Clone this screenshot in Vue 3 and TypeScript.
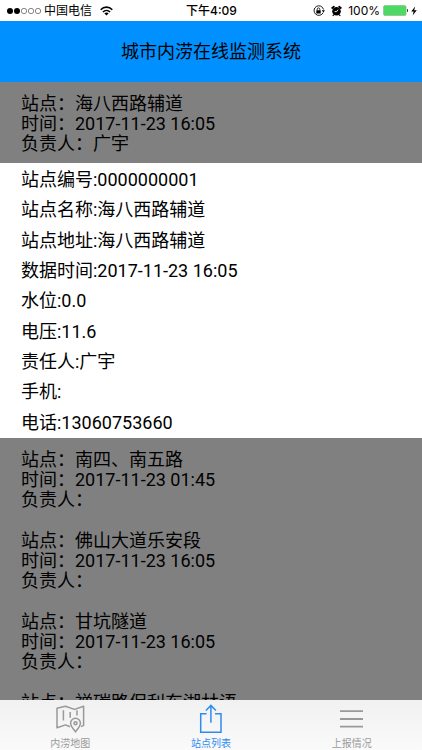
<script setup lang="ts">
import { ref } from 'vue'

interface Station {
  name: string
  time: string
  owner: string
}

interface Field {
  label: string
  value: string
}

type TabId = 'map' | 'list' | 'report'

const stations: Station[] = [
  { name: '海八西路辅道', time: '2017-11-23 16:05', owner: '广宇' },
  { name: '南四、南五路', time: '2017-11-23 01:45', owner: '' },
  { name: '佛山大道乐安段', time: '2017-11-23 16:05', owner: '' },
  { name: '甘坑隧道', time: '2017-11-23 16:05', owner: '' },
  { name: '禅碳路保利东湖林语', time: '2017-11-23 16:05', owner: '' },
]

const details: Field[] = [
  { label: '站点编号', value: '0000000001' },
  { label: '站点名称', value: '海八西路辅道' },
  { label: '站点地址', value: '海八西路辅道' },
  { label: '数据时间', value: '2017-11-23 16:05' },
  { label: '水位', value: '0.0' },
  { label: '电压', value: '11.6' },
  { label: '责任人', value: '广宇' },
  { label: '手机', value: '' },
  { label: '电话', value: '13060753660' },
]

const tabs: { id: TabId; label: string }[] = [
  { id: 'map', label: '内涝地图' },
  { id: 'list', label: '站点列表' },
  { id: 'report', label: '上报情况' },
]

const expanded = ref(0)
const activeTab = ref<TabId>('list')
</script>

<template>
  <div class="app">
    <div class="status">
      <div class="status-side">
        <svg class="signal" width="36" height="8" viewBox="0 0 36 8">
          <circle cx="4" cy="4" r="3" fill="#000" />
          <circle cx="11" cy="4" r="3" fill="#000" />
          <g fill="none" stroke="#555" stroke-width="0.7">
            <circle cx="18" cy="4" r="2.7" />
            <circle cx="25" cy="4" r="2.7" />
            <circle cx="32" cy="4" r="2.7" />
          </g>
        </svg>
        <span>中国电信</span>
        <svg class="wifi" width="13" height="10" viewBox="0 0 13 10">
          <g fill="none" stroke="#000" stroke-width="1.6">
            <path d="M0.7 3.7C4 0.3 9 0.3 12.3 3.7" />
            <path d="M2.9 6C5 3.9 8 3.9 10.1 6" />
          </g>
          <path d="M4.4 7.4C5.6 6.3 7.4 6.3 8.6 7.4L6.5 9.6Z" fill="#000" />
        </svg>
      </div>
      <span class="clock">下午4:09</span>
      <div class="status-side end">
        <svg width="12" height="12" viewBox="0 0 12 12">
          <path d="M10.2 7.6A4.8 4.8 0 1 1 10.5 4.4" fill="none" stroke="#000" stroke-width="0.9" />
          <path d="M8.8 5.2h3.2L10.4 7.4Z" fill="#000" />
          <rect x="3.3" y="5.2" width="4.4" height="3.4" rx="0.4" fill="#000" />
          <path d="M4.2 5.4V4.2a1.3 1.3 0 0 1 2.6 0V5.4" fill="none" stroke="#000" stroke-width="0.8" />
        </svg>
        <svg width="11" height="12" viewBox="0 0 11 12">
          <circle cx="5.5" cy="6.3" r="4.3" fill="#000" />
          <path d="M1.2 3L2.8 1.6M9.8 3L8.2 1.6" stroke="#000" stroke-width="1.8" stroke-linecap="round" />
          <path d="M2.8 9.6L1.8 11M8.2 9.6L9.2 11" stroke="#000" stroke-width="1.2" />
          <path d="M3.6 6.6H5.7L7 4.6" fill="none" stroke="#fff" stroke-width="0.9" />
        </svg>
        <span>100%</span>
        <svg class="battery" width="26" height="11" viewBox="0 0 26 11">
          <rect x="0.5" y="0.5" width="22.6" height="10" rx="1.5" fill="#4cd964" stroke="#8bb392" stroke-width="0.6" />
          <path d="M24 3.8C25.5 4.2 25.5 6.8 24 7.2Z" fill="#333" />
        </svg>
        <svg class="bolt" width="6" height="10" viewBox="0 0 6 10">
          <path d="M4.2 0.5L0.2 5.4H2.7L1.6 9.5L5.8 4.2H3.2Z" fill="#000" />
        </svg>
      </div>
    </div>

    <header class="header">
      <h1>城市内涝在线监测系统</h1>
    </header>

    <main class="content">
      <template v-for="(station, i) in stations" :key="i">
        <section class="station" @click="expanded = i">
          <p>站点：{{ station.name }}</p>
          <p>时间：{{ station.time }}</p>
          <p>负责人：{{ station.owner }}</p>
        </section>
        <section v-if="i === expanded" class="details">
          <p v-for="field in details" :key="field.label">{{ field.label }}:{{ field.value }}</p>
        </section>
      </template>
    </main>

    <nav class="tabs">
      <a
        v-for="tab in tabs"
        :key="tab.id"
        :href="'#' + tab.id"
        class="tab"
        :class="{ active: tab.id === activeTab }"
        @click.prevent="activeTab = tab.id"
      >
        <svg v-if="tab.id === 'map'" width="30" height="30" viewBox="0 0 30 30" fill="none" stroke="currentColor" stroke-width="1.5">
          <path d="M15 22.8L10.5 20.9L2 23.7V4.2L10.5 2.2L19.5 5.4L28.6 2.2V21.4L26 22.6" stroke-linejoin="round" />
          <path d="M8.4 6.3V16.5M15.2 8V13.8M22 6.3V11.5" />
          <path d="M20.5 27.8C17.7 24.3 15.6 22 15.6 19.2A4.9 4.9 0 0 1 25.4 19.2C25.4 22 23.3 24.3 20.5 27.8Z" />
          <circle cx="20.5" cy="19.3" r="1.5" />
        </svg>
        <svg v-else-if="tab.id === 'list'" width="30" height="30" viewBox="0 0 30 30" fill="none" stroke="currentColor" stroke-width="1.5">
          <path d="M10.6 9.8H4.7V28.2H25V9.8H19" />
          <path d="M14.9 18.8V2M9.9 6.5L14.9 1.4L19.9 6.5" />
        </svg>
        <svg v-else width="30" height="30" viewBox="0 0 30 30" fill="none" stroke="currentColor" stroke-width="1.8">
          <path d="M3 7.2H26M3 15H26M3 22.6H26" />
        </svg>
        <span>{{ tab.label }}</span>
      </a>
    </nav>
  </div>
</template>

<style>
body {
  margin: 0;
}
</style>

<style scoped>
.app {
  display: flex;
  flex-direction: column;
  height: 100vh;
  overflow: hidden;
  background: #808080;
  color: #000;
  font-family: Roboto, "Noto Sans CJK SC", sans-serif;
}

.status {
  display: flex;
  align-items: center;
  flex: none;
  height: 21px;
  padding: 0 5px 0 6px;
  background: #fff;
  font-family: Inter, "Noto Sans CJK SC", sans-serif;
  font-size: 12px;
  line-height: 20px;
}

.status-side {
  display: flex;
  flex: 1;
  align-items: center;
  gap: 2px;
}

.end {
  justify-content: flex-end;
  gap: 6px;
}

.wifi {
  margin-left: 6px;
}

.battery {
  margin-left: -3px;
}

.bolt {
  margin-left: -4px;
}

.clock {
  font-weight: 500;
}

.header {
  display: flex;
  align-items: center;
  justify-content: center;
  flex: none;
  height: 61px;
  background: #0090ff;
}

h1 {
  margin: 0;
  font-size: 18px;
  font-weight: 400;
  line-height: 24px;
}

.content {
  flex: 1;
  min-height: 0;
  overflow-y: auto;
  scrollbar-width: none;
  font-size: 18px;
}

p {
  margin: 0;
}

.station {
  padding: 12px 21px 9px;
  line-height: 20px;
}

.details {
  display: grid;
  grid-auto-rows: 1fr;
  align-items: center;
  box-sizing: border-box;
  min-height: 275px;
  padding: 2px 21px 0;
  background: #fff;
  line-height: 30px;
}

.tabs {
  display: flex;
  flex: none;
  height: 50px;
  background: linear-gradient(#f1f1f1, #fafafa);
}

.tab {
  display: flex;
  flex: 1;
  flex-direction: column;
  align-items: center;
  gap: 2px;
  padding-top: 4px;
  color: #999;
  font-size: 10px;
  line-height: 16px;
  text-decoration: none;
}

.tab.active {
  color: #2d8cf0;
}

.tab svg {
  flex: none;
}
</style>
